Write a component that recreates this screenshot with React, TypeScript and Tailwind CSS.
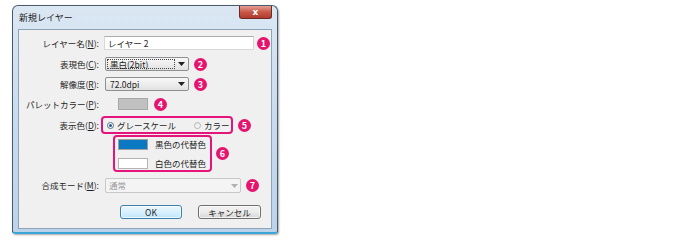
import React from "react";

const font = { fontFamily: '"Noto Sans CJK JP", "Noto Sans", sans-serif' };

function Badge({ n }: { n: number }) {
    return (
        <span className="w-[13px] h-[13px] rounded-full bg-[#e5146f] text-white text-[9px] font-bold leading-none flex items-center justify-center shrink-0">
            {n}
        </span>
    );
}

function Arrow({ disabled }: { disabled?: boolean }) {
    return (
        <svg width="7" height="4" viewBox="0 0 7 4" className="shrink-0">
            <path d="M0 0h7L3.5 4z" fill={disabled ? "#b0b0b0" : "#222"} />
        </svg>
    );
}

function Label({ children }: { children: React.ReactNode }) {
    return <span className="w-[80px] text-right shrink-0 whitespace-nowrap">{children}</span>;
}

export default function App() {
    return (
        <div className="w-[696px] h-[243px] bg-white text-[8.5px] text-[#1e1e1e] leading-none" style={font}>
            <div className="ml-[12px] mt-[5px] w-[266px] h-[229px] rounded-t-[6px] rounded-b-[3px] border border-[#4a5a6b] border-b-[#3aa6d8] border-b-2 bg-gradient-to-b from-[#dbe7f3] via-[#c9dbee] to-[#bcd3ea] flex flex-col shadow-[1px_1px_2px_rgba(0,0,0,0.35)]">
                {/* title bar */}
                <div className="h-[23px] flex items-start justify-between pl-[6px] pr-[5px]">
                    <span className="mt-[7px] text-[9px] text-[#222]">新規レイヤー</span>
                    <div className="w-[33px] h-[13px] rounded-b-[3px] border border-t-0 border-[#6b2a2a] bg-gradient-to-b from-[#e5a096] via-[#c75847] to-[#b23b2c] flex items-center justify-center">
                        <span className="text-white text-[9px] font-bold leading-none" style={{ fontFamily: '"DejaVu Sans", sans-serif' }}>x</span>
                    </div>
                </div>
                {/* client */}
                <div className="mx-[5px] mb-[3px] flex-1 bg-[#f0f0f0] border border-[#8fa3b8] flex flex-col">
                    <div className="mt-[6px] h-[14px] flex items-center">
                        <Label>レイヤー名(<u>N</u>):</Label>
                        <div className="ml-[5px] w-[150px] h-[14px] bg-white border border-[#d8d8d8] border-t-[#abadb3] flex items-center pl-[3px]">レイヤー 2</div>
                        <span className="ml-[3px]"><Badge n={1} /></span>
                    </div>
                    <div className="mt-[7px] h-[14px] flex items-center">
                        <Label>表現色(<u>C</u>):</Label>
                        <div className="ml-[6px] w-[84px] h-[14px] rounded-[2px] border border-[#8e8f8f] bg-gradient-to-b from-[#f8f8f8] to-[#e2e2e2] flex items-center p-[1px]">
                            <span className="flex-1 h-full border border-dotted border-[#444] flex items-center pl-[2px]">黒白(2bit)</span>
                            <span className="w-[12px] flex justify-center"><Arrow /></span>
                        </div>
                        <span className="ml-[5px]"><Badge n={2} /></span>
                    </div>
                    <div className="mt-[6px] h-[14px] flex items-center">
                        <Label>解像度(<u>R</u>):</Label>
                        <div className="ml-[6px] w-[84px] h-[14px] rounded-[2px] border border-[#8e8f8f] bg-gradient-to-b from-[#f8f8f8] to-[#e2e2e2] flex items-center p-[1px]">
                            <span className="flex-1 h-full flex items-center pl-[3px]">72.0dpi</span>
                            <span className="w-[12px] flex justify-center"><Arrow /></span>
                        </div>
                        <span className="ml-[5px]"><Badge n={3} /></span>
                    </div>
                    <div className="mt-[6px] h-[14px] flex items-center">
                        <Label>パレットカラー(<u>P</u>):</Label>
                        <div className="ml-[19px] w-[30px] h-[12px] bg-[#c0c0c0] border border-[#a8a8a8]" />
                        <span className="ml-[6px]"><Badge n={4} /></span>
                    </div>
                    <div className="mt-[5px] h-[18px] flex items-center">
                        <Label>表示色(<u>D</u>):</Label>
                        <div className="ml-[2px] w-[132px] h-[18px] rounded-[4px] border-2 border-[#e5147a] flex items-center pl-[4px]">
                            <span className="w-[7px] h-[7px] rounded-full border border-[#5a6d80] bg-white flex items-center justify-center">
                                <span className="w-[3px] h-[3px] rounded-full bg-[#1b5c99]" />
                            </span>
                            <span className="ml-[3px]">グレースケール</span>
                            <span className="ml-[18px] w-[7px] h-[7px] rounded-full border border-[#b5b5b5] bg-gradient-to-b from-[#e8e8e8] to-[#f8f8f8]" />
                            <span className="ml-[3px]">カラー</span>
                        </div>
                        <span className="ml-[5px]"><Badge n={5} /></span>
                    </div>
                    <div className="mt-[1px] h-[37px] flex items-center">
                        <div className="ml-[94px] w-[99px] h-[37px] rounded-[4px] border-2 border-[#e5147a] flex flex-col justify-center gap-[8px] pl-[3px]">
                            <div className="flex items-center">
                                <span className="w-[30px] h-[11px] bg-[#0b78c2] border border-[#a0a0a0]" />
                                <span className="ml-[7px]">黒色の代替色</span>
                            </div>
                            <div className="flex items-center">
                                <span className="w-[30px] h-[11px] bg-white border border-[#b4b4b4]" />
                                <span className="ml-[7px]">白色の代替色</span>
                            </div>
                        </div>
                        <span className="ml-[4px]"><Badge n={6} /></span>
                    </div>
                    <div className="mt-[6px] h-[15px] flex items-center">
                        <Label>合成モード(<u>M</u>):</Label>
                        <div className="ml-[6px] w-[136px] h-[15px] rounded-[2px] border border-[#c8c8c8] bg-[#f4f4f4] flex items-center pl-[3px] text-[#9a9a9a]">
                            <span className="flex-1">通常</span>
                            <span className="w-[12px] flex justify-center"><Arrow disabled /></span>
                        </div>
                        <span className="ml-[5px]"><Badge n={7} /></span>
                    </div>
                    <div className="mt-[12px] h-[14px] flex items-center">
                        <div className="ml-[101px] w-[62px] h-[14px] rounded-[3px] border border-[#3c7fb1] bg-gradient-to-b from-[#eaf6fd] via-[#d9f0fc] to-[#bee6fd] flex items-center justify-center shadow-[inset_0_0_0_1px_rgba(255,255,255,0.7)]">OK</div>
                        <div className="ml-[16px] w-[63px] h-[14px] rounded-[3px] border border-[#707070] bg-gradient-to-b from-[#f2f2f2] via-[#ebebeb] to-[#d6d6d6] flex items-center justify-center shadow-[inset_0_0_0_1px_rgba(255,255,255,0.7)]">キャンセル</div>
                    </div>
                </div>
            </div>
        </div>
    );
}
